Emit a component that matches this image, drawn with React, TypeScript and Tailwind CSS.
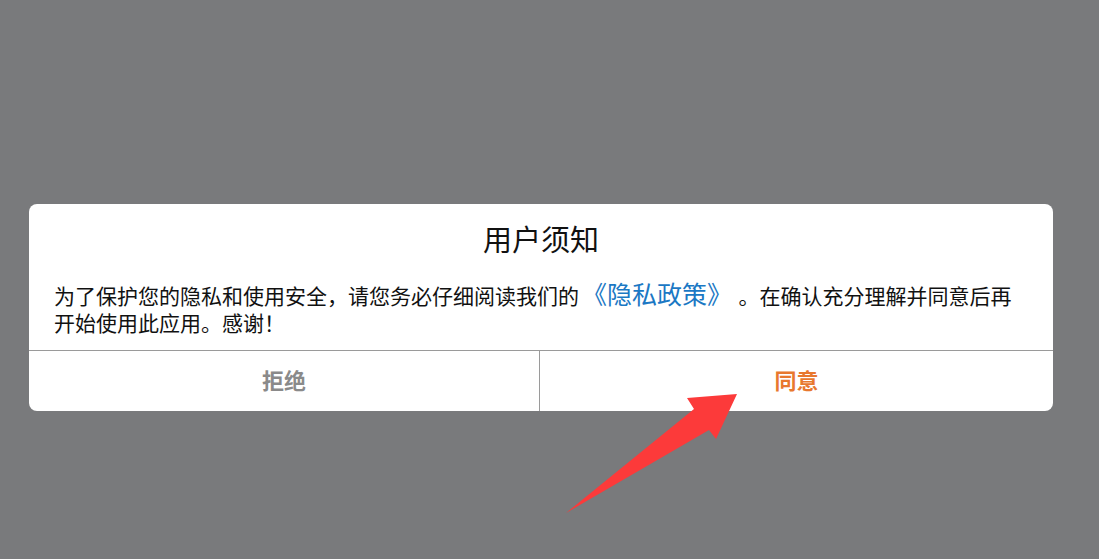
import React from "react";

export default function App() {
  return (
    <div
      className="relative w-[1099px] h-[559px] overflow-hidden bg-[#797a7c] pt-[204px] pl-[29px]"
      style={{ fontFamily: '"Noto Sans CJK SC", "Noto Sans", sans-serif' }}
    >
      <div className="w-[1024px] rounded-[8px] bg-white overflow-hidden">
        <div className="pt-[16px] text-center text-[29px] leading-[36px] text-[#111]">用户须知</div>
        <div className="mt-[24px] pl-[25px] pr-[38px] pb-[14px] text-[21px] leading-[27px] text-[#111]">
          为了保护您的隐私和使用安全，请您务必仔细阅读我们的
          <span className="ml-[3px] mr-[19px] text-[25px] leading-[27px] text-[#1b78c4]">《隐私政策》</span>
          。在确认充分理解并同意后再开始使用此应用。感谢！
        </div>
        <div className="flex h-[61px] border-t border-[#9a9a9a]">
          <div className="flex w-[511px] items-center justify-center border-r border-[#9a9a9a] pb-[4px] text-[22px] font-bold text-[#8a8a8a]">
            拒绝
          </div>
          <div className="flex flex-1 items-center justify-center pb-[4px] text-[22px] font-bold text-[#e8782e]">
            同意
          </div>
        </div>
      </div>
      <svg className="absolute left-0 top-0" width="1099" height="559" viewBox="0 0 1099 559">
        <polygon
          points="737,394 716,439 709,430 566,513 694,409 687,398"
          fill="#fc3a3a"
        />
      </svg>
    </div>
  );
}
